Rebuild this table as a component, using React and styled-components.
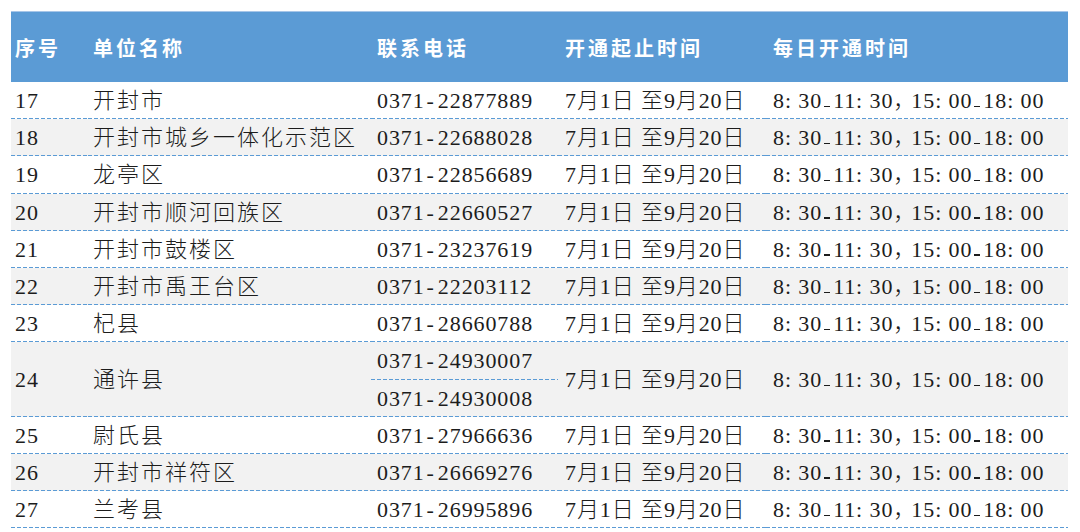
import React from 'react'
import styled, { createGlobalStyle, css } from 'styled-components'

const GlobalStyle = createGlobalStyle`
  html, body {
    margin: 0;
    padding: 0;
    background: #ffffff;
  }
`

const rows = [
  { no: '17', name: '开封市', phones: ['0371-22877889'] },
  { no: '18', name: '开封市城乡一体化示范区', phones: ['0371-22688028'] },
  { no: '19', name: '龙亭区', phones: ['0371-22856689'] },
  { no: '20', name: '开封市顺河回族区', phones: ['0371-22660527'] },
  { no: '21', name: '开封市鼓楼区', phones: ['0371-23237619'] },
  { no: '22', name: '开封市禹王台区', phones: ['0371-22203112'] },
  { no: '23', name: '杞县', phones: ['0371-28660788'] },
  { no: '24', name: '通许县', phones: ['0371-24930007', '0371-24930008'] },
  { no: '25', name: '尉氏县', phones: ['0371-27966636'] },
  { no: '26', name: '开封市祥符区', phones: ['0371-26669276'] },
  { no: '27', name: '兰考县', phones: ['0371-26995896'] },
]

const widths = [77, 283, 187, 208, 302]

export default function App() {
  return (
    <Page>
      <GlobalStyle />
      <Table>
        <colgroup>
          {widths.map((w, i) => <col key={i} style={{ width: w }} />)}
        </colgroup>
        <thead>
          <tr>
            <HeadCell>序号</HeadCell>
            <HeadCell>单位名称</HeadCell>
            <HeadCell>联系电话</HeadCell>
            <HeadCell>开通起止时间</HeadCell>
            <HeadCell>每日开通时间</HeadCell>
          </tr>
        </thead>
        <tbody>
          {rows.map((r, i) => {
            const span = r.phones.length
            const shaded = i % 2 === 1
            return (
              <React.Fragment key={r.no}>
                <Row $shaded={shaded}>
                  <Cell rowSpan={span}><Num>{r.no}</Num></Cell>
                  <Cell rowSpan={span}><Name>{r.name}</Name></Cell>
                  <PhoneCell><Phone value={r.phones[0]} /></PhoneCell>
                  <Cell rowSpan={span}><DateRange /></Cell>
                  <Cell rowSpan={span}><Hours /></Cell>
                </Row>
                {r.phones.slice(1).map(p => (
                  <Row key={p} $shaded={shaded}>
                    <PhoneCell><Phone value={p} /></PhoneCell>
                  </Row>
                ))}
              </React.Fragment>
            )
          })}
        </tbody>
      </Table>
    </Page>
  )
}

function Phone({ value }) {
  const [area, rest] = value.split('-')
  return (
    <Num>
      {area}<Hyphen>-</Hyphen>{rest}
    </Num>
  )
}

function DateRange() {
  return <Num>7月1日 至9月20日</Num>
}

function Hours() {
  return (
    <Num>
      8: 30<Dash />11: 30<Comma>，</Comma>15: 00<Dash />18: 00
    </Num>
  )
}

const dottedRule = css`
  background-image: linear-gradient(to right, #5b9bd5 4px, transparent 4px);
  background-size: 6px 1px;
  background-position: left bottom;
  background-repeat: repeat-x;
`

const Page = styled.div`
  padding: 11px 12px 0 11px;
`

const Table = styled.table`
  width: 1057px;
  table-layout: fixed;
  border-collapse: collapse;
  border-spacing: 0;
`

const HeadCell = styled.th`
  height: 70px;
  padding: 0 0 0 4px;
  background: #5b9bd5;
  border-top: 1px solid #a7c6e8;
  color: #ffffff;
  text-align: left;
  vertical-align: middle;
  font-family: "Noto Sans CJK SC", "Noto Sans", sans-serif;
  font-weight: 700;
  font-size: 20px;
  letter-spacing: 3px;
  white-space: nowrap;
  &:nth-child(2) { padding-left: 5px; }
  &:nth-child(3) { padding-left: 6px; }
  &:nth-child(4), &:nth-child(5) { padding-left: 7px; }
`

const Row = styled.tr`
  height: 37.2px;
  background: ${p => (p.$shaded ? '#f2f2f2' : '#ffffff')};
`

const Cell = styled.td`
  padding: 1px 0 0 4px;
  vertical-align: middle;
  white-space: nowrap;
  ${dottedRule}
  &:nth-child(2) { padding-left: 5px; }
  &:nth-child(4), &:nth-child(5) { padding-left: 7px; }
`

const PhoneCell = styled.td`
  padding: 1px 0 0 6px;
  vertical-align: middle;
  white-space: nowrap;
  ${dottedRule}
`

const Num = styled.span`
  font-family: "Liberation Serif", "Noto Sans CJK SC", serif;
  font-size: 22px;
  font-weight: 300;
  letter-spacing: 0.9px;
  color: #1c1c1c;
  line-height: 1;
`

const Name = styled.span`
  font-family: "Liberation Serif", "Noto Sans CJK SC", serif;
  font-size: 22px;
  font-weight: 300;
  letter-spacing: 2px;
  color: #1c1c1c;
  line-height: 1;
`

const Hyphen = styled.span`
  display: inline-block;
  padding: 0 3px 0 2px;
`

const Comma = styled.span`
  letter-spacing: -4px;
`

const Dash = styled.span`
  display: inline-block;
  width: 6px;
  height: 1.5px;
  margin: 0 3px 0 2px;
  background: #1c1c1c;
  vertical-align: 1px;
`
